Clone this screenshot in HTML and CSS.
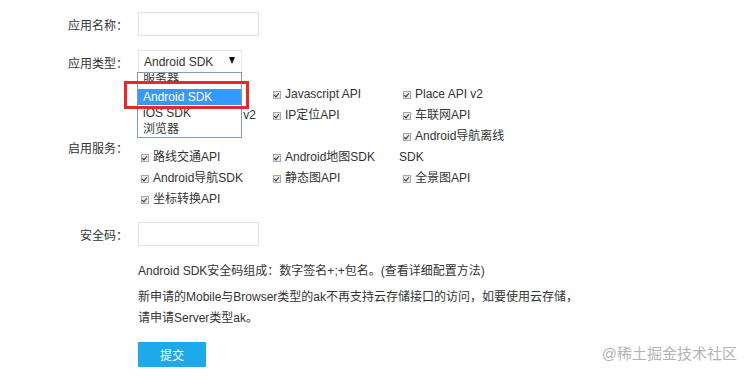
FILE: index.html
```html
<!DOCTYPE html>
<html lang="zh-CN">
<head>
    <meta charset="UTF-8">
    <meta name="viewport" content="width=device-width, initial-scale=1.0">
    <title>创建应用</title>
    <link rel="stylesheet" href="styles.css">
</head>
<body>
    <div class="page">
        <div class="row row-name">
            <label class="lbl">应用名称：</label>
            <input type="text" class="text-input">
        </div>
        <div class="row row-type">
            <label class="lbl">应用类型：</label>
            <div class="select-wrap">
                <div class="select">
                    <span>Android SDK</span>
                    <span class="arrow"></span>
                </div>
                <ul class="dropdown">
                    <li class="opt opt-first">服务器</li>
                    <li class="opt opt-active">Android SDK</li>
                    <li class="opt">iOS SDK</li>
                    <li class="opt">浏览器</li>
                </ul>
                <div class="mark"></div>
            </div>
        </div>
        <div class="row row-services">
            <label class="lbl">启用服务：</label>
            <div class="services">
                <span class="item"><i class="cb"></i>云检索API</span>
                <span class="item"><i class="cb"></i>Javascript API</span>
                <span class="item"><i class="cb"></i>Place API v2</span>

                <span class="item item-end"><i class="cb"></i>Geocoding API v2</span>
                <span class="item"><i class="cb"></i>IP定位API</span>
                <span class="item"><i class="cb"></i>车联网API</span>

                <span class="item"></span>
                <span class="item"></span>
                <span class="item"><i class="cb"></i>Android导航离线</span>

                <span class="item"><i class="cb"></i>路线交通API</span>
                <span class="item"><i class="cb"></i>Android地图SDK</span>
                <span class="item item-wrap">SDK</span>

                <span class="item"><i class="cb"></i>Android导航SDK</span>
                <span class="item"><i class="cb"></i>静态图API</span>
                <span class="item"><i class="cb"></i>全景图API</span>

                <span class="item"><i class="cb"></i>坐标转换API</span>
            </div>
        </div>
        <div class="row row-code">
            <label class="lbl">安全码：</label>
            <input type="text" class="text-input">
        </div>
        <div class="notes">
            <p class="note-one">Android SDK安全码组成：数字签名+;+包名。(查看详细配置方法)</p>
            <p class="note-two">新申请的Mobile与Browser类型的ak不再支持云存储接口的访问，如要使用云存储，<br>请申请Server类型ak。</p>
        </div>
        <button class="btn" type="button">提交</button>
    </div>
    <div class="watermark">@稀土掘金技术社区</div>
</body>
</html>
```

FILE: styles.css
```css
body {
    margin: 0;
    padding: 0;
    background-color: #fff;
    color: #333;
    font-family: 'Liberation Sans', 'Noto Sans CJK SC', sans-serif;
    font-size: 12px;
}
.page {
    padding-top: 12px;
}
.row {
    display: flex;
    align-items: center;
}
.lbl {
    width: 128px;
    margin-right: 10px;
    flex: none;
    text-align: right;
    color: #333;
}
.text-input {
    width: 121px;
    height: 24px;
    box-sizing: border-box;
    border: 1px solid #e1e1e1;
    margin: 0;
    padding: 0 5px;
    outline: none;
}
.row-type {
    margin-top: 14px;
}
.select-wrap {
    position: relative;
}
.select {
    width: 104px;
    height: 24px;
    box-sizing: border-box;
    border: 1px solid #e6e6e6;
    display: flex;
    align-items: center;
    justify-content: space-between;
    padding: 0 6px 0 5px;
    color: #333;
}
.arrow {
    width: 0;
    height: 0;
    border-left: 3.5px solid transparent;
    border-right: 3.5px solid transparent;
    border-top: 7px solid #111;
    margin-top: -3px;
}
.dropdown {
    position: absolute;
    left: -1px;
    top: 22px;
    width: 105px;
    height: 66px;
    box-sizing: border-box;
    margin: 0;
    padding: 0;
    list-style: none;
    border: 1px solid #7f9db9;
    background-color: #fff;
    overflow: hidden;
    z-index: 2;
}
.opt {
    height: 16px;
    line-height: 16px;
    padding-left: 5px;
    color: #333;
}
.opt-first {
    height: 19px;
    line-height: 19px;
    margin-top: -3px;
}
.opt-active {
    background-color: #3399ff;
    color: #fff;
}
.mark {
    position: absolute;
    left: -14px;
    top: 31px;
    width: 125px;
    height: 28px;
    box-sizing: border-box;
    border: 3px solid #e8262b;
    z-index: 3;
}
.row-services {
    margin-top: 10px;
}
.services {
    display: grid;
    grid-template-columns: 132px 130px 130px;
    grid-auto-rows: 21px;
    padding-left: 3px;
    line-height: 21px;
}
.item {
    display: flex;
    align-items: center;
    white-space: nowrap;
    color: #333;
}
.item-end {
    justify-content: flex-end;
    padding-right: 17px;
}
.item-wrap {
    margin-left: -4px;
}
.cb {
    width: 8px;
    height: 8px;
    box-sizing: border-box;
    border: 1px solid #a7a7a7;
    background-color: #e9e9e9;
    margin-right: 4px;
    flex: none;
    position: relative;
}
.cb::after {
    content: "";
    position: absolute;
    left: 1px;
    top: 0;
    width: 2px;
    height: 4px;
    border-right: 1.5px solid #333;
    border-bottom: 1.5px solid #333;
    transform: rotate(40deg);
}
.row-code {
    margin-top: 12px;
}
.notes {
    margin-left: 138px;
    margin-top: 15px;
    color: #333;
}
.notes p {
    margin: 0;
    line-height: 21px;
}
.note-two {
    margin-top: 5px !important;
}
.btn {
    display: block;
    margin: 13px 0 0 138px;
    width: 68px;
    height: 25px;
    border: none;
    padding: 0;
    background-color: #1caaea;
    color: #fff;
    font-family: inherit;
    font-size: 12px;
}
.watermark {
    position: absolute;
    right: 15px;
    bottom: 13px;
    font-size: 15px;
    color: #b3b3b3;
}
```
